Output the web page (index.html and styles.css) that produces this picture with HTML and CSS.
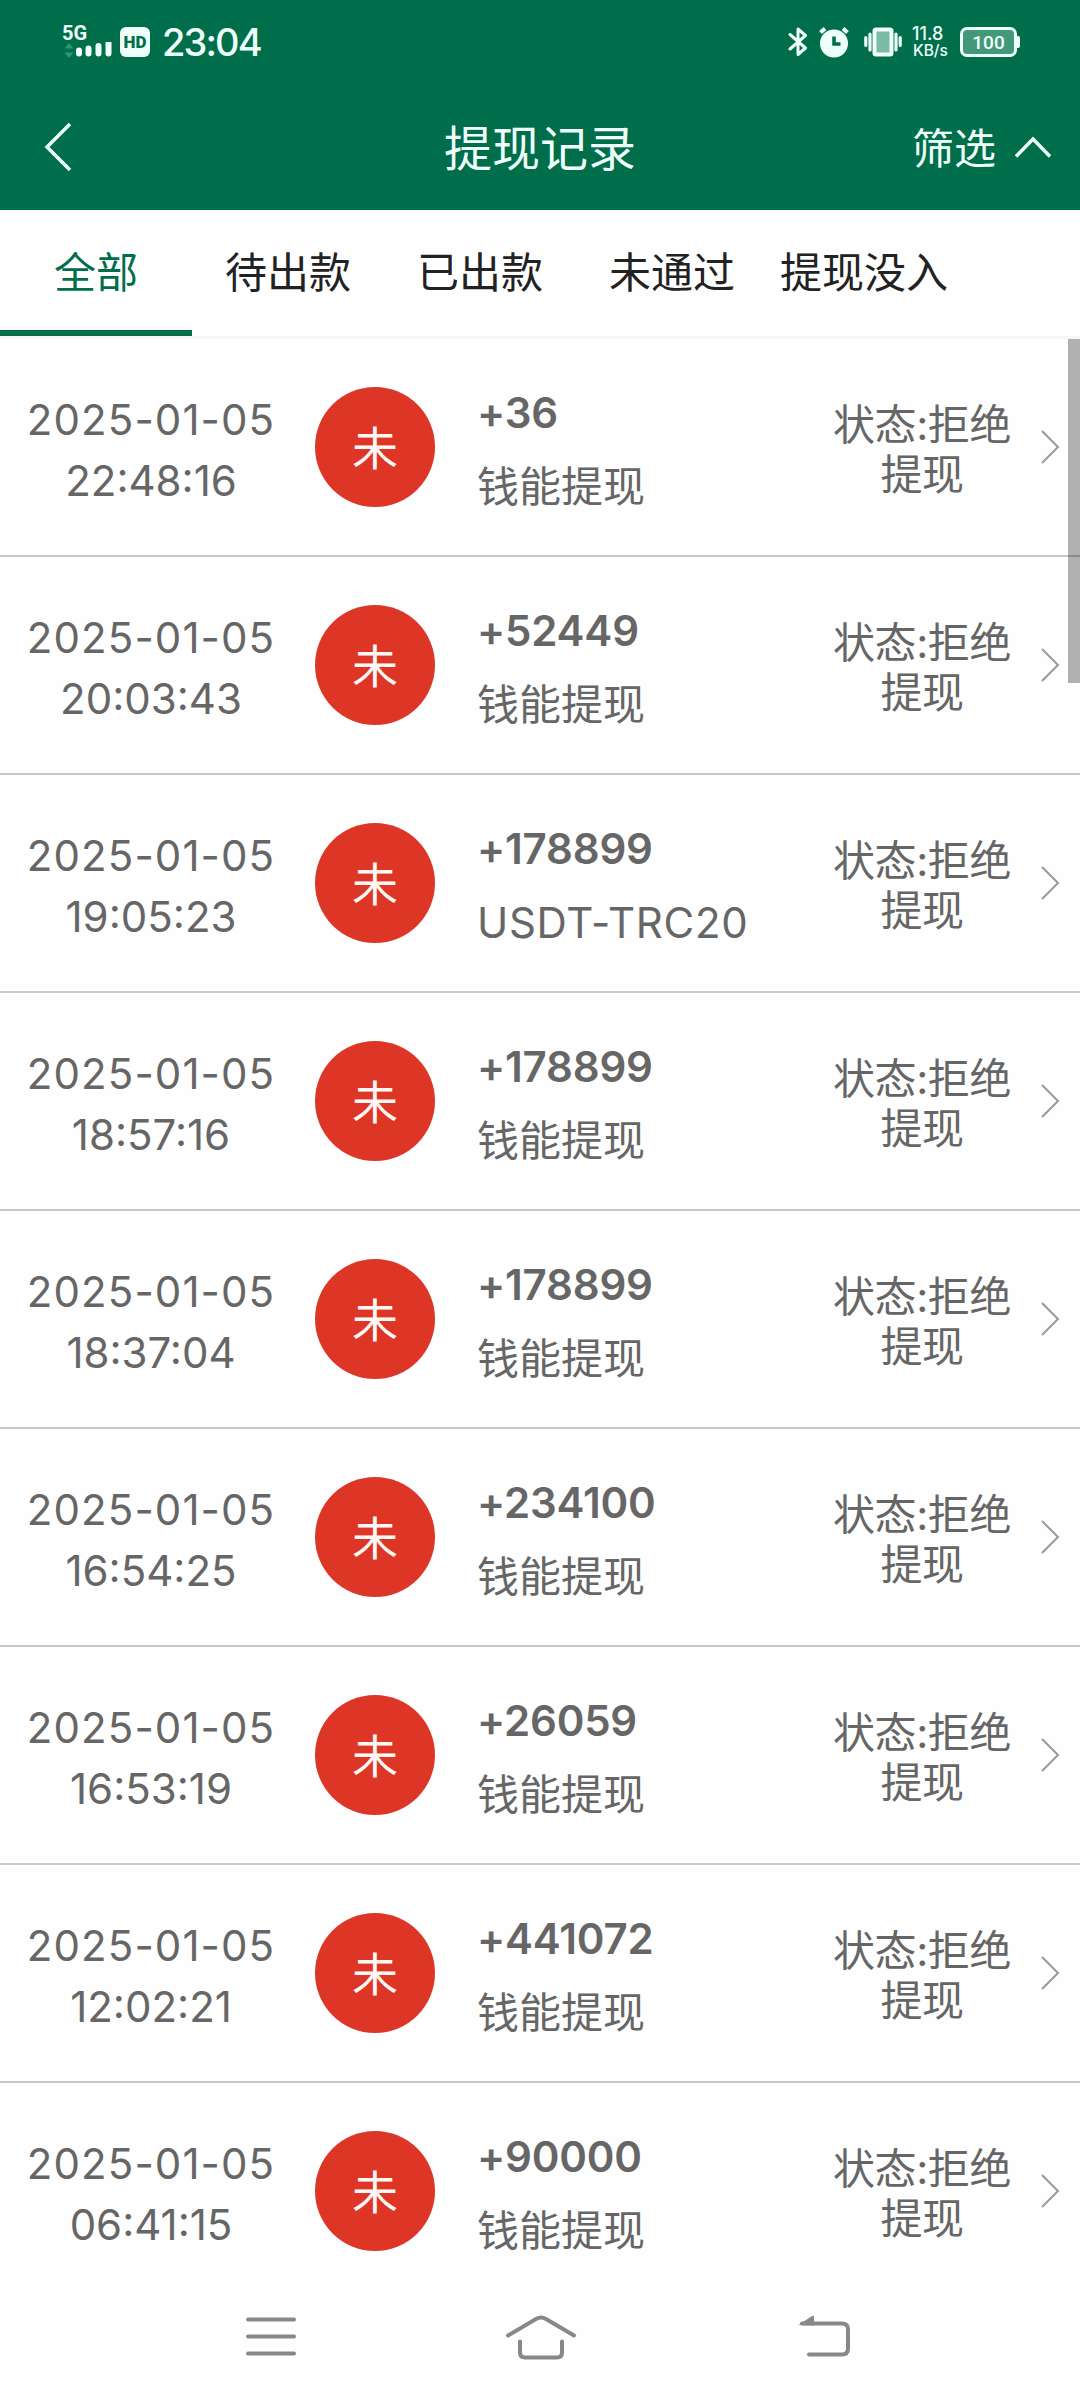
FILE: index.html
```html
<!DOCTYPE html>
<html lang="zh-CN">
<head>
<meta charset="utf-8">
<title>提现记录</title>
<link rel="stylesheet" href="styles.css">
</head>
<body>
<header class="top">
  <div class="status">
    <div class="status-left">
      <div class="signal">
        <span class="net">5G</span>
        <svg class="bars" width="48" height="18" viewBox="0 0 48 18">
          <path class="dim" d="M0.500 6.500L5 1l4.500 5.500zM0.500 10.500L5 16l4.500-5.500z"/>
          <path class="bar" d="M15 8.500v3M24.500 6.500v5M34.500 4v7.500M44.500 1v10.500"/>
        </svg>
      </div>
      <span class="hd">HD</span>
      <span class="clock">23:04</span>
    </div>
    <div class="status-right">
      <svg class="bt" width="20" height="32" viewBox="0 0 20 32"><path d="M2 8.500L17.500 22L10 28.500V3L17.500 9.500L2 23"/></svg>
      <svg class="alarm" width="30" height="32" viewBox="0 0 30 32"><circle cx="15" cy="17.500" r="14"/><path class="bells" d="M1.500 6.500L6 2.500M24 2.500L28.500 6.500"/><path class="hands" d="M15 10.500V18h6.500"/></svg>
      <svg class="vibrate" width="38" height="30" viewBox="0 0 38 30"><rect x="10.500" y="2.500" width="17" height="25" rx="1.500"/><path d="M1.800 10.500v8M6 7v16M32 7v16M36.200 10.500v8"/></svg>
      <div class="speed"><span>11.8</span><span class="unit">KB/s</span></div>
      <div class="battery"><span class="cell">100</span><i class="nub"></i></div>
    </div>
  </div>
  <div class="titlebar">
    <svg class="back" width="31" height="52" viewBox="0 0 31 52"><path d="M28 3L5 26l23 23"/></svg>
    <h1>提现记录</h1>
    <div class="filter"><span>筛选</span><svg width="40" height="24" viewBox="0 0 40 24"><path d="M3 21.500L20 4l17 17.500"/></svg></div>
  </div>
</header>
<nav class="tabs">
  <span class="tab active">全部</span><span class="tab">待出款</span><span class="tab">已出款</span><span class="tab">未通过</span><span class="tab">提现没入</span>
</nav>
<main class="list">
  <div id="rows"></div>
  <div class="thumb"></div>
</main>
<footer class="sysnav">
  <svg width="54" height="44" viewBox="0 0 54 44"><path d="M4 6.500h46M4 23.500h46M4 40.500h46"/></svg>
  <svg class="home" width="74" height="48" viewBox="0 0 74 48"><path d="M4 22.500L32 6q5-3 10 0L70 22.500M16 28.500v11q0 5 5 5h32q5 0 5-5v-11"/></svg>
  <svg width="56" height="48" viewBox="0 0 56 48"><path d="M5 10.500h40q6 0 6 6v19q0 6-6 6H12"/><path class="tip" d="M1.500 12L15 3q2-1 2 1v8.500z"/></svg>
</footer>
<script src="list.js"></script>
</body>
</html>
```
FILE: styles.css
```css
* { box-sizing: border-box; }
body {
  margin: 0;
  width: 1080px;
  height: 2400px;
  overflow: hidden;
  display: flex;
  flex-direction: column;
  background: #fefefe;
  font-family: Inter, "Noto Sans CJK SC", sans-serif;
  color: #666;
}
svg { display: block; fill: none; flex: none; }
.top { height: 210px; background: #006d4b; color: #effffa; }
.status { height: 84px; display: flex; justify-content: space-between; padding: 0 60px 0 62px; }
.status-left, .status-right { display: flex; align-items: center; }
.signal { width: 58px; height: 34px; margin-top: -1px; }
.net { display: block; font: 700 20px/17px Roboto, sans-serif; }
.bars { margin-left: 2px; }
.bars .dim { fill: #279a75; }
.bars .bar { stroke: #effffa; stroke-width: 6; stroke-linecap: round; }
.hd {
  width: 30px; height: 30px; border-radius: 6px; background: #effffa; color: #006d4b;
  font: 900 17px/31px Roboto, sans-serif; text-align: center;
}
.clock { margin-left: 12px; font-size: 38px; font-weight: 500; letter-spacing: -1.900px; }
.bt path { stroke: #effffa; stroke-width: 3; stroke-linejoin: round; stroke-linecap: round; }
.alarm { margin-left: 11px; }
.alarm circle { fill: #effffa; }
.bells { stroke: #effffa; stroke-width: 4; }
.hands { stroke: #006d4b; stroke-width: 3.500px; }
.vibrate { margin-left: 15px; }
.vibrate rect { fill: #7cbca6; stroke: #effffa; stroke-width: 4; }
.vibrate path { stroke: #effffa; stroke-width: 3.200px; stroke-linecap: round; }
.speed { margin-left: 10px; width: 38px; display: flex; flex-direction: column; font-size: 18px; line-height: 17px; font-weight: 500; white-space: nowrap; }
.speed .unit { font-size: 15.500px; padding-left: 1px; }
.battery { margin-left: 10px; display: flex; align-items: center; }
.cell {
  width: 57px; height: 30px; border: 3px solid #effffa; border-radius: 7px; background: #44987a;
  font: 500 19px/25px Roboto, sans-serif; text-align: center;
}
.nub { width: 3px; height: 12px; background: #effffa; border-radius: 0 2px 2px 0; }
.titlebar { height: 126px; display: grid; grid-template-columns: 1fr auto 1fr; align-items: center; padding: 0 27px; }
.titlebar path { stroke: #effffa; stroke-width: 3.500px; }
.back { margin-left: 15px; }
h1 { margin: 0; padding-top: 4px; font-size: 48px; font-weight: 400; line-height: 70px; }
.filter { display: flex; align-items: center; justify-content: flex-end; gap: 17px; font-size: 42px; line-height: 60px; }
.filter span { padding-top: 4px; }
.tabs { height: 129px; display: flex; border-bottom: 3px solid #f6f6f6; color: #222; font-size: 42px; }
.tab { width: 192px; height: 126px; line-height: 126px; text-align: center; white-space: nowrap; }
.active { color: #006d4b; border-bottom: 6px solid #006d4b; }
.list { position: relative; height: 1960px; font-size: 42px; }
.row { height: 218px; border-bottom: 2px solid #c8c8c8; display: flex; align-items: center; }
.row:last-child { border-bottom-color: transparent; }
.when { width: 302px; padding-top: 5px; text-align: center; line-height: 61px; white-space: nowrap; }
.date { letter-spacing: 1.100px; }
.badge { width: 120px; height: 120px; border-radius: 50%; margin-left: 13px; background: #de3626; color: #fff8f4; font-size: 46px; line-height: 122px; text-align: center; }
.info { margin-left: 42px; padding-top: 6px; width: 340px; white-space: nowrap; line-height: 74px; }
.amount { font-weight: 600; letter-spacing: -.2px; }
.latin { letter-spacing: .7px; }
.state { width: 210px; padding-top: 5px; text-align: center; line-height: 49.500px; letter-spacing: -.4px; }
.state span { display: block; }
.go { margin-left: 12px; }
.go path { stroke: #999; stroke-width: 2; }
.thumb { position: absolute; right: 0; top: 0; width: 12px; height: 344px; background: rgba(0, 0, 0, .3); }
.sysnav { flex: 1; display: flex; justify-content: space-between; padding: 14px 227px 0 244px; }
.home { margin-left: -13px; }
.sysnav path { stroke: #888; stroke-width: 4; stroke-linecap: round; }
.sysnav .tip { fill: #888; stroke: none; }
```
FILE: list.js
```js
const records = [
  ["22:48:16", "+36", "钱能提现"],
  ["20:03:43", "+52449", "钱能提现"],
  ["19:05:23", "+178899", "USDT-TRC20"],
  ["18:57:16", "+178899", "钱能提现"],
  ["18:37:04", "+178899", "钱能提现"],
  ["16:54:25", "+234100", "钱能提现"],
  ["16:53:19", "+26059", "钱能提现"],
  ["12:02:21", "+441072", "钱能提现"],
  ["06:41:15", "+90000", "钱能提现"]
];
document.getElementById("rows").innerHTML = records.map(([time, amount, method]) => `
  <div class="row">
    <div class="when"><div class="date">2025-01-05</div><div class="time">${time}</div></div>
    <div class="badge">未</div>
    <div class="info"><div class="amount">${amount}</div><div class="method${/^[A-Z]/.test(method) ? " latin" : ""}">${method}</div></div>
    <div class="state"><span>状态:拒绝</span><span>提现</span></div>
    <svg class="go" width="22" height="36" viewBox="0 0 22 36"><path d="M3 2l16 16L3 34"/></svg>
  </div>`).join("");
```
